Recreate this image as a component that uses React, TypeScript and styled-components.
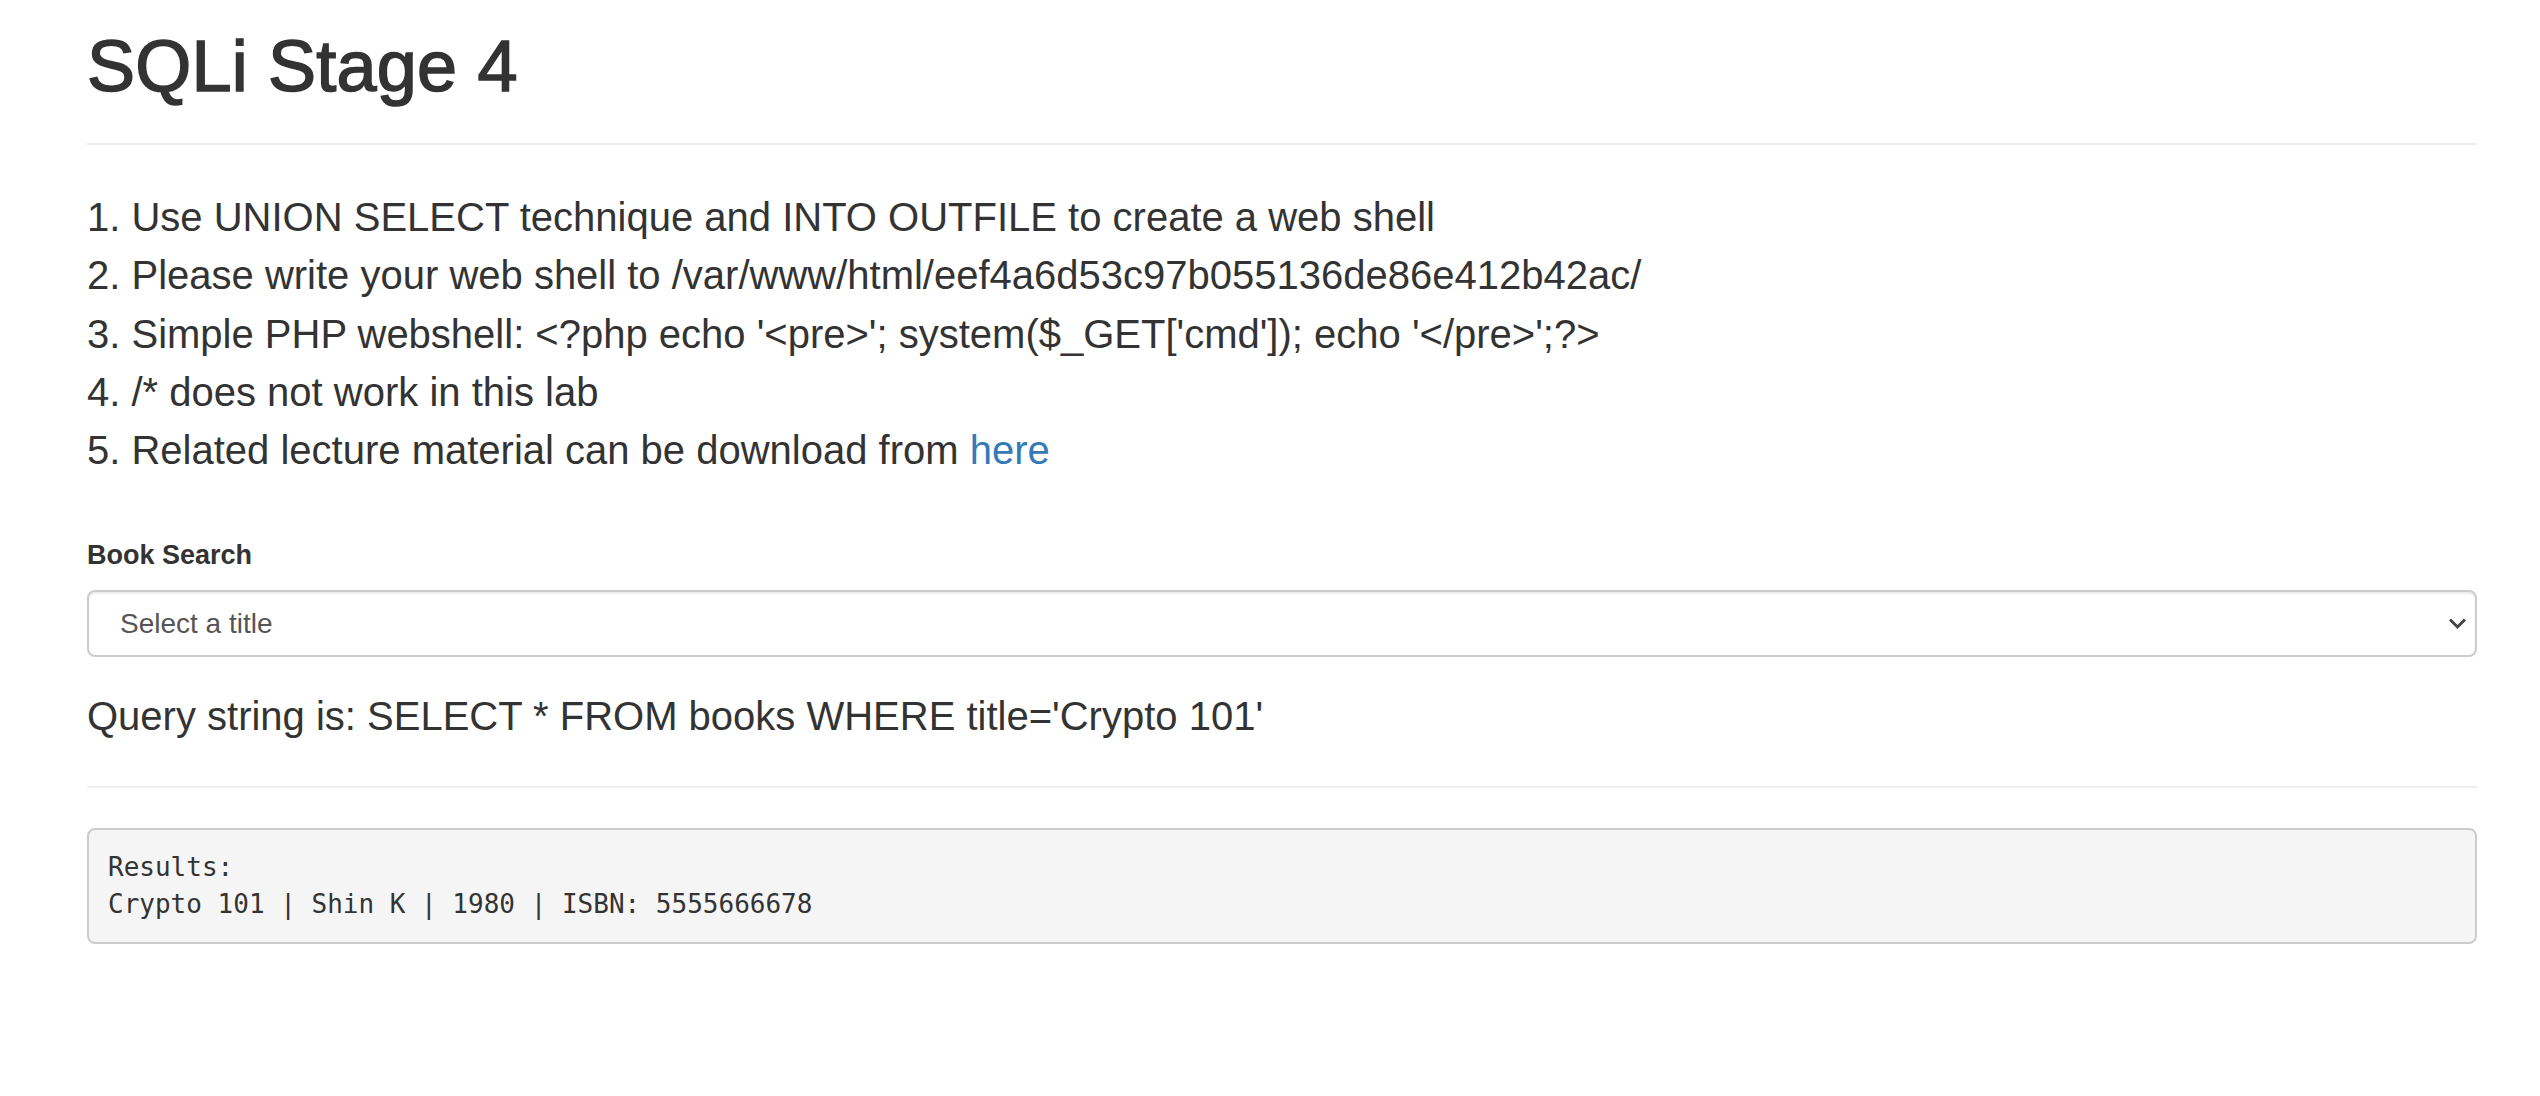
import React from "react";
import styled, { createGlobalStyle } from "styled-components";

const GlobalStyle = createGlobalStyle`
  html, body {
    margin: 0;
    padding: 0;
    background: #ffffff;
  }
  body {
    font-family: "Liberation Sans", Arial, Helvetica, sans-serif;
    color: #333333;
  }
  * { box-sizing: border-box; }
`;

const Page = styled.div`
  padding: 26px 63px 60px 87px;
`;

const Title = styled.h1`
  margin: 0;
  font-size: 72px;
  line-height: 80px;
  font-weight: 500;
  letter-spacing: 0.2px;
  color: #333333;
  -webkit-text-stroke: 1.6px #333333;
`;

const Rule = styled.hr<{ $gap: number }>`
  margin: ${(p) => p.$gap}px 0 0;
  border: 0;
  border-top: 2px solid #eeeeee;
  height: 0;
`;

const Steps = styled.div`
  margin-top: 43px;
  font-size: 40px;
  line-height: 58.3px;
  color: #333333;
`;

const Step = styled.div`
  white-space: nowrap;
`;

const Link = styled.a`
  color: #337ab7;
  text-decoration: none;
`;

const FormGroup = styled.div`
  margin-top: 56px;
  display: flex;
  flex-direction: column;
`;

const Label = styled.label`
  font-size: 27px;
  line-height: 40px;
  font-weight: 700;
  color: #333333;
  margin-bottom: 15px;
`;

const SelectWrap = styled.div`
  position: relative;
`;

const Select = styled.select`
  appearance: none;
  -webkit-appearance: none;
  display: block;
  width: 100%;
  height: 67px;
  padding: 0 60px 0 31px;
  font-family: "Liberation Sans", Arial, Helvetica, sans-serif;
  font-size: 28px;
  color: #555555;
  background: #ffffff;
  border: 2px solid #cccccc;
  border-radius: 8px;
  box-shadow: inset 0 2px 2px rgba(0, 0, 0, 0.075);
  outline: none;
`;

const Chevron = styled.svg`
  position: absolute;
  right: 10px;
  top: 27px;
  width: 19px;
  height: 13px;
  pointer-events: none;
`;

const Query = styled.p`
  margin: 30px 0 0;
  font-size: 40px;
  line-height: 58.3px;
  color: #333333;
`;

const Results = styled.pre`
  margin: 40px 0 0;
  padding: 19px 19px;
  font-family: "DejaVu Sans Mono", Menlo, monospace;
  font-size: 26px;
  line-height: 37.14px;
  color: #333333;
  background: #f5f5f5;
  border: 2px solid #cccccc;
  border-radius: 8px;
  white-space: pre-wrap;
`;

export default function App() {
  return (
    <>
      <GlobalStyle />
      <Page>
        <Title>SQLi Stage 4</Title>
        <Rule $gap={37} />
        <Steps>
          <Step>1. Use UNION SELECT technique and INTO OUTFILE to create a web shell</Step>
          <Step>2. Please write your web shell to /var/www/html/eef4a6d53c97b055136de86e412b42ac/</Step>
          <Step>3. Simple PHP webshell: &lt;?php echo '&lt;pre&gt;'; system($_GET['cmd']); echo '&lt;/pre&gt;';?&gt;</Step>
          <Step>4. /* does not work in this lab</Step>
          <Step>
            5. Related lecture material can be download from <Link href="#">here</Link>
          </Step>
        </Steps>
        <FormGroup>
          <Label htmlFor="book">Book Search</Label>
          <SelectWrap>
            <Select id="book" defaultValue="">
              <option value="">Select a title</option>
              <option value="Crypto 101">Crypto 101</option>
            </Select>
            <Chevron viewBox="0 0 19 13" aria-hidden="true">
              <polyline
                points="2,2.5 9.5,10 17,2.5"
                fill="none"
                stroke="#444444"
                strokeWidth="3"
                strokeLinecap="butt"
                strokeLinejoin="miter"
              />
            </Chevron>
          </SelectWrap>
        </FormGroup>
        <Query>Query string is: SELECT * FROM books WHERE title='Crypto 101'</Query>
        <Rule $gap={40} />
        <Results>{"Results:\nCrypto 101 | Shin K | 1980 | ISBN: 5555666678"}</Results>
      </Page>
    </>
  );
}
